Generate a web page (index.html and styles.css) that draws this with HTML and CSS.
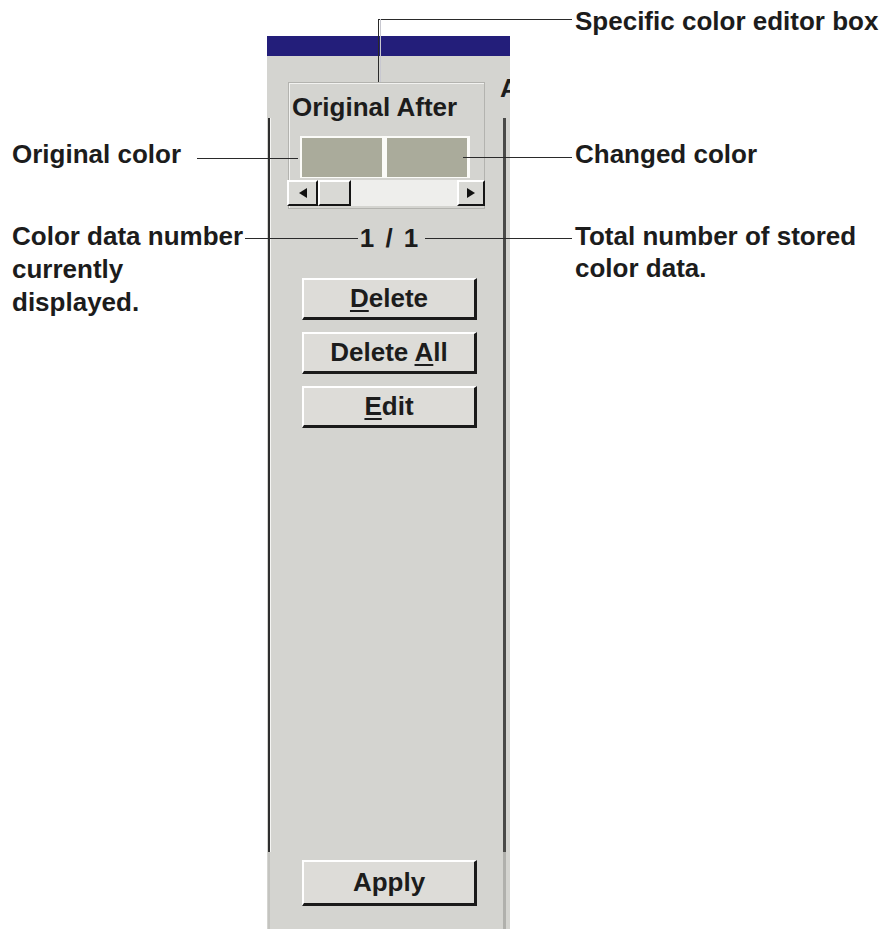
FILE: index.html
```html
<!DOCTYPE html>
<html>
<head>
	<title>Color editor</title>
	<meta charset="utf-8">
	<link rel="stylesheet" href="styles.css">
</head>
<body>
	<div class="figure">
		<div class="window">
			<div class="titlebar"></div>
			<div class="client">
				<span class="tab-peek">A</span>
				<div class="page">
					<!--color editor group-->
					<div class="groupbox">
						<div class="group-title">Original After</div>
						<div class="swatches">
							<span class="swatch"></span>
							<span class="swatch"></span>
						</div>
						<div class="scrollbar">
							<span class="sb-btn sb-left"></span>
							<span class="sb-btn sb-thumb"></span>
							<span class="sb-track"></span>
							<span class="sb-btn sb-right"></span>
						</div>
					</div>
					<div class="counter">1 / 1</div>
					<div class="actions">
						<button class="btn"><u>D</u>elete</button>
						<button class="btn">Delete <u>A</u>ll</button>
						<button class="btn"><u>E</u>dit</button>
					</div>
				</div>
				<div class="page-foot">
					<button class="btn btn-apply">Apply</button>
				</div>
			</div>
		</div>

		<!--callouts-->
		<div class="note note-editor">Specific color editor box</div>
		<div class="note note-orig">Original color</div>
		<div class="note note-changed">Changed color</div>
		<div class="note note-index">Color data number<br>currently<br>displayed.</div>
		<div class="note note-total">Total number of stored<br>color data.</div>

		<span class="lead lead-editor-h"></span>
		<span class="lead lead-editor-v"></span>
		<span class="lead lead-orig"></span>
		<span class="lead lead-changed"></span>
		<span class="lead lead-index"></span>
		<span class="lead lead-total"></span>
	</div>
</body>
</html>
```

FILE: styles.css
```css
*{
	margin:0;
	padding:0;
	box-sizing:border-box;
}
body{
	background:#fff;
	font-family:"Liberation Sans",Arial,sans-serif;
	color:#1c1c1c;
}
.figure{
	position:relative;
	width:884px;
	height:929px;
	padding:36px 0 0 267px;
	overflow:hidden;
}
.window{
	width:243px;
	height:893px;
	display:flex;
	flex-direction:column;
}
.titlebar{
	flex:none;
	height:20px;
	background:#231e7a;
}
.client{
	position:relative;
	flex:1;
	display:flex;
	flex-direction:column;
	padding:62px 4px 0 1px;
	background:#d4d4d0;
	overflow:hidden;
}
.tab-peek{
	position:absolute;
	left:233px;
	top:17px;
	font:bold 26px/30px "Liberation Sans",Arial,sans-serif;
}
.page{
	flex:none;
	height:734px;
	border-left:2px solid #2e2e2e;
	border-right:3px solid #4a4a48;
	box-shadow:inset 1px 0 0 #f4f4f2;
}
.groupbox{
	width:197px;
	height:127px;
	margin:-36px 0 0 18px;
	padding-top:9px;
	border:1px solid #b3b3af;
	box-shadow:inset 1px 1px 0 #f2f2f0;
}
.group-title{
	padding-left:3px;
	font:bold 26px/30px "Liberation Sans",Arial,sans-serif;
	white-space:nowrap;
}
.swatches{
	display:flex;
	gap:5px;
	width:170px;
	height:42px;
	margin:14px 0 0 11px;
	padding:2px 3px 1px 2px;
	background:#fbfbf8;
}
.swatch{
	flex:1;
	background:#aaab9b;
}
.scrollbar{
	display:flex;
	width:198px;
	height:26px;
	margin:2px 0 0 -2px;
}
.sb-btn{
	display:flex;
	align-items:center;
	justify-content:center;
	background:#d9d9d5;
	border-style:solid;
	border-width:2px;
	border-color:#fff #151515 #151515 #fff;
}
.sb-left{
	width:31px;
}
.sb-thumb{
	width:33px;
}
.sb-right{
	width:28px;
}
.sb-track{
	flex:1;
	background:#eeeeec;
}
.sb-left::before,
.sb-right::before{
	content:'';
	border-style:solid;
}
.sb-left::before{
	border-width:5px 8px 5px 0;
	border-color:transparent #111 transparent transparent;
}
.sb-right::before{
	border-width:5px 0 5px 8px;
	border-color:transparent transparent transparent #111;
}
.counter{
	margin-top:14px;
	padding-left:7px;
	font:bold 26px/30px "Liberation Sans",Arial,sans-serif;
	letter-spacing:2px;
	text-align:center;
}
.actions{
	display:flex;
	flex-direction:column;
	gap:12px;
	width:175px;
	margin:25px 0 0 32px;
}
.btn{
	display:block;
	width:175px;
	height:42px;
	font:bold 26px/37px "Liberation Sans",Arial,sans-serif;
	color:#1c1c1c;
	text-align:center;
	background:#dddcd8;
	border-style:solid;
	border-width:2px 3px 3px 2px;
	border-color:#fff #1a1a1a #1a1a1a #fff;
}
.btn u{
	text-decoration-thickness:2px;
	text-underline-offset:3px;
}
.page-foot{
	flex:1;
	padding:8px 0 0 32px;
	border-left:2px solid #c4c4c0;
	border-right:3px solid #b0b0ac;
}
.btn-apply{
	height:46px;
	line-height:41px;
}
.note{
	position:absolute;
	font:bold 26px/30px "Liberation Sans",Arial,sans-serif;
	white-space:nowrap;
}
.note-editor{
	left:575px;
	top:6px;
}
.note-orig{
	left:12px;
	top:139px;
}
.note-changed{
	left:575px;
	top:139px;
}
.note-index{
	left:12px;
	top:220px;
	line-height:33px;
}
.note-total{
	left:575px;
	top:220px;
	line-height:32px;
}
.lead{
	position:absolute;
	background:#2a2a2a;
}
.lead-editor-h{
	left:378px;
	top:19px;
	width:194px;
	height:1px;
}
.lead-editor-v{
	left:378px;
	top:19px;
	width:1px;
	height:63px;
	box-shadow:2px 0 0 #c8c8d0;
}
.lead-orig{
	left:197px;
	top:158px;
	width:101px;
	height:1px;
}
.lead-changed{
	left:463px;
	top:157px;
	width:109px;
	height:1px;
}
.lead-index{
	left:245px;
	top:238px;
	width:113px;
	height:1px;
}
.lead-total{
	left:425px;
	top:238px;
	width:147px;
	height:1px;
}
```
